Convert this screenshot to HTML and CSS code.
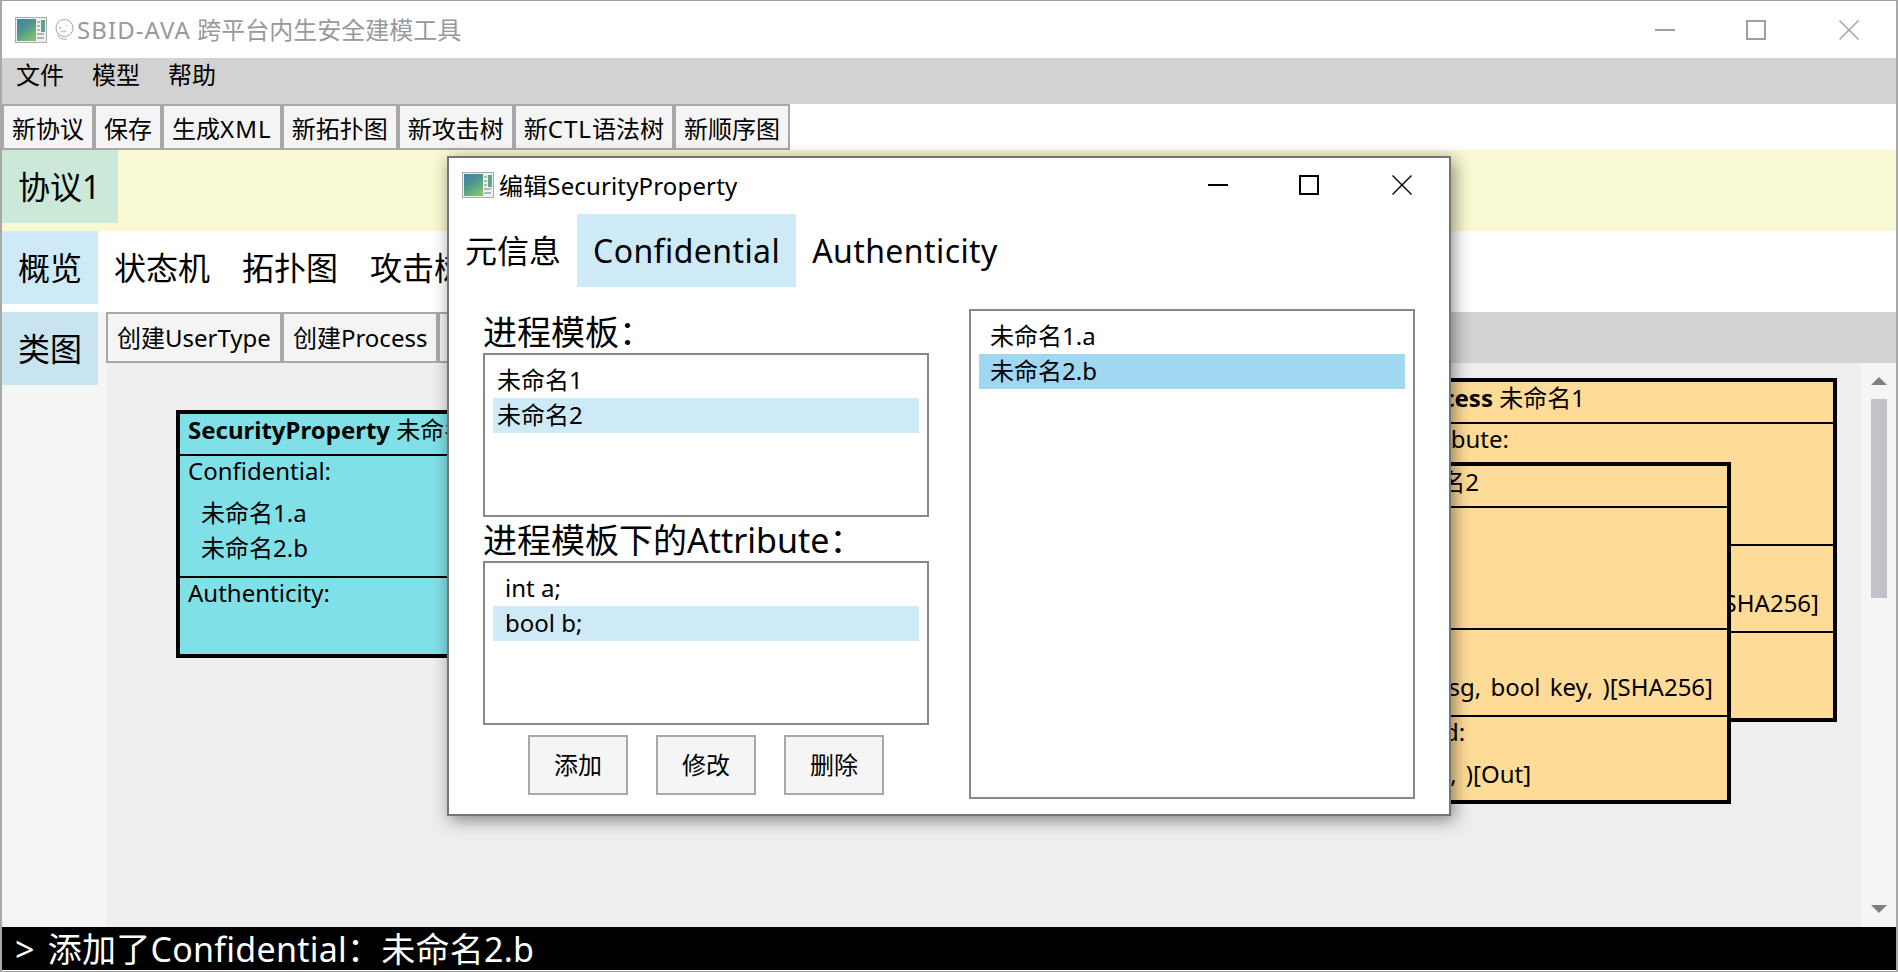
FILE: index.html
```html
<!DOCTYPE html>
<html lang="zh-CN">
<head>
<meta charset="utf-8">
<title>SBID-AVA</title>
<link rel="stylesheet" href="styles.css">
</head>
<body>
<svg class="defs" width="0" height="0" aria-hidden="true">
  <defs>
    <linearGradient id="appgrad" x1="0" y1="0" x2="0.6" y2="1">
      <stop offset="0" stop-color="#3f7fa8"/>
      <stop offset="0.55" stop-color="#4f9a8a"/>
      <stop offset="1" stop-color="#7fc070"/>
    </linearGradient>
    <symbol id="appicon" viewBox="0 0 32 26">
      <rect x="0.5" y="0.5" width="31" height="25" fill="#eef0f0" stroke="#a8acac"/>
      <rect x="2" y="2" width="19" height="22" fill="url(#appgrad)"/>
      <rect x="26" y="3" width="4" height="12" fill="#5fa58c"/>
      <path d="M22 5h3M22 9h3M22 13h3M22 17h7M22 21h7" stroke="#9aa2a2" stroke-width="1.5"/>
    </symbol>
  </defs>
</svg>
<div class="window">
  <header class="titlebar">
    <svg class="appicon"><use href="#appicon"/></svg>
    <svg class="smiley" viewBox="0 0 20 21" fill="none" stroke="#a8a8a8" stroke-width="1">
      <circle cx="10.5" cy="9" r="8.5"/>
      <path d="M4 16c1 3 3 4 6 4h3M5 8l2 2M12 6l1 1M7 12c2 1 3 1 5 0"/>
    </svg>
    <span class="title-text"><span class="caps">SBID-AVA</span> 跨平台内生安全建模工具</span>
    <div class="controls">
      <svg class="ctl" viewBox="0 0 20 20"><path d="M0 10h20" stroke-width="2"/></svg>
      <svg class="ctl" viewBox="0 0 20 20"><rect x="1" y="1" width="18" height="18" fill="none" stroke-width="2"/></svg>
      <svg class="ctl ctl-close" viewBox="0 0 20 20"><path d="M0.5 0.5l19 19M19.5 0.5l-19 19" stroke-width="1.4"/></svg>
    </div>
  </header>
  <nav class="menubar">
    <span class="menu-item">文件</span><span class="menu-item">模型</span><span class="menu-item">帮助</span>
  </nav>
  <div class="toolbar">
    <button class="btn">新协议</button><button class="btn">保存</button><button class="btn">生成<span class="caps">XML</span></button><button class="btn">新拓扑图</button><button class="btn">新攻击树</button><button class="btn">新<span class="caps">CTL</span>语法树</button><button class="btn">新顺序图</button>
  </div>
  <div class="tabrow tabrow-yellow">
    <div class="tab tab-green">协议1</div>
  </div>
  <div class="tabrow">
    <div class="tab tab-blue">概览</div>
    <div class="tab">状态机</div>
    <div class="tab">拓扑图</div>
    <div class="tab">攻击树</div>
  </div>
  <div class="workspace">
    <aside class="side">
      <div class="tab tab-side">类图</div>
    </aside>
    <section class="editor">
      <div class="canvas-tools">
        <button class="btn btn-tool">创建UserType</button><button class="btn btn-tool">创建Process</button><button class="btn btn-tool">创建SecurityProperty</button>
      </div>
      <div class="canvas-wrap">
        <div class="canvas">
          <div class="card card-sec">
            <div class="card-head"><b>SecurityProperty</b> 未命名</div>
            <div class="card-sect sect-tall">
              <div class="sect-label">Confidential:</div>
              <div class="sect-item">未命名1.a</div>
              <div class="sect-item">未命名2.b</div>
            </div>
            <div class="card-sect">
              <div class="sect-label">Authenticity:</div>
            </div>
          </div>
          <div class="card card-p1">
            <div class="card-head"><b>Process</b> 未命名1</div>
            <div class="card-sect sect-tall"><div class="sect-label">Attribute:</div></div>
            <div class="card-sect sect-mid">
              <div class="sect-label">Method:</div>
              <div class="sect-item sect-end">bit func(bit msg, )[SHA256]</div>
            </div>
            <div class="card-sect"><div class="sect-label">CommMethod:</div></div>
          </div>
          <div class="card card-p2">
            <div class="card-head"><b>Process</b> 未命名2</div>
            <div class="card-sect sect-tall"><div class="sect-label">Attribute:</div></div>
            <div class="card-sect sect-mid">
              <div class="sect-label">Method:</div>
              <div class="sect-item sect-end sect-spaced">func(bit msg, bool key, )[SHA256]</div>
            </div>
            <div class="card-sect">
              <div class="sect-label">CommMethod:</div>
              <div class="sect-item sect-comm">void send(m, )[Out]</div>
            </div>
          </div>
        </div>
        <div class="scrollbar">
          <span class="arrow arrow-up"></span>
          <span class="thumb"></span>
          <span class="arrow arrow-down"></span>
        </div>
      </div>
    </section>
  </div>
  <footer class="status">&gt; 添加了Confidential：未命名2.b</footer>
  <div class="bottom-strip"></div>

  <div class="dialog">
    <div class="dlg-title">
      <svg class="dlg-icon"><use href="#appicon"/></svg>
      <span class="dlg-title-text">编辑SecurityProperty</span>
      <div class="controls">
        <svg class="ctl ctl-dark" viewBox="0 0 20 20"><path d="M0 10h20" stroke-width="2"/></svg>
        <svg class="ctl ctl-dark" viewBox="0 0 20 20"><rect x="1" y="1" width="18" height="18" fill="none" stroke-width="2"/></svg>
        <svg class="ctl ctl-dark ctl-close" viewBox="0 0 20 20"><path d="M0.5 0.5l19 19M19.5 0.5l-19 19" stroke-width="1.4"/></svg>
      </div>
    </div>
    <div class="dlg-tabs">
      <div class="tab">元信息</div>
      <div class="tab tab-blue tab-latin">Confidential</div>
      <div class="tab tab-latin">Authenticity</div>
    </div>
    <div class="dlg-body">
      <div class="dlg-left">
        <div class="dlg-label">进程模板：</div>
        <ul class="list list-small">
          <li class="row">未命名1</li>
          <li class="row row-sel">未命名2</li>
        </ul>
        <div class="dlg-label">进程模板下的Attribute：</div>
        <ul class="list list-small">
          <li class="row row-ind">int a;</li>
          <li class="row row-ind row-sel">bool b;</li>
        </ul>
        <div class="dlg-actions">
          <button class="btn btn-act">添加</button><button class="btn btn-act">修改</button><button class="btn btn-act">删除</button>
        </div>
      </div>
      <ul class="list list-big">
        <li class="row row-big">未命名1.a</li>
        <li class="row row-big row-strong">未命名2.b</li>
      </ul>
    </div>
  </div>
</div>
</body>
</html>
```
FILE: styles.css
```css
* { box-sizing: border-box; }
html, body { margin: 0; padding: 0; }
body {
  width: 1898px;
  height: 972px;
  overflow: hidden;
  background: #fff;
  color: #000;
  font-family: "Noto Sans", "Noto Sans CJK SC", sans-serif;
  font-size: 24px;
}
.defs { position: absolute; }
.caps { letter-spacing: 0.045em; }
.window {
  position: relative;
  width: 1898px;
  height: 972px;
  display: flex;
  flex-direction: column;
  border-top: 1px solid #a0a0a0;
  border-left: 2px solid #a8a8a8;
  border-right: 2px solid #a8a8a8;
  background: #fff;
}
.titlebar {
  height: 57px;
  flex: none;
  display: flex;
  align-items: center;
  padding-left: 13px;
}
.appicon { width: 32px; height: 26px; flex: none; }
.smiley { width: 20px; height: 21px; margin-left: 7px; flex: none; }
.title-text { color: #999; margin-left: 3px; line-height: 57px; }
.controls {
  margin-left: auto;
  margin-right: 37px;
  display: flex;
  gap: 71px;
}
.ctl { width: 20px; height: 20px; stroke: #a0a0a0; display: block; }
.ctl-close { margin-left: 2px; }
.ctl-dark { stroke: #000; }
.menubar {
  height: 46px;
  flex: none;
  background: #d2d2d2;
  display: flex;
  align-items: flex-start;
  padding-left: 14px;
  gap: 28px;
}
.menu-item { line-height: 34px; }
.toolbar {
  height: 46px;
  flex: none;
  display: flex;
  align-items: stretch;
}
.btn {
  font: inherit;
  color: #000;
  background: #f4f4f4;
  border: 2px solid #a8a8a8;
  padding: 3px 8px 0;
  height: 46px;
  line-height: 38px;
  white-space: nowrap;
}
.tabrow {
  height: 81px;
  flex: none;
  display: flex;
  align-items: flex-start;
}
.tabrow-yellow { background: #f8f8d2; }
.tab {
  height: 73px;
  padding: 0 16px;
  font-size: 32px;
  line-height: 73px;
  white-space: nowrap;
}
.tab-latin { letter-spacing: 0.013em; }
.tab-green { background: #cbe8d8; padding-right: 18px; }
.tab-blue { background: #cfeaf7; }
.tab-side { background: #c8e4f1; width: 96px; }
.workspace {
  flex: 1;
  min-height: 0;
  display: flex;
}
.side {
  width: 104px;
  flex: none;
  background: #f5f5f5;
}
.editor {
  flex: 1;
  min-width: 0;
  display: flex;
  flex-direction: column;
}
.canvas-tools {
  height: 51px;
  flex: none;
  background: #d2d2d2;
  display: flex;
  align-items: flex-start;
  overflow: hidden;
}
.btn-tool { height: 51px; flex: none; padding: 0 9px; line-height: 43px; }
.canvas-wrap {
  flex: 1;
  min-height: 0;
  display: flex;
}
.canvas {
  flex: 1;
  position: relative;
  background: #eee;
  overflow: hidden;
}
.scrollbar {
  width: 35px;
  flex: none;
  background: #f5f5f5;
  position: relative;
}
.arrow {
  position: absolute;
  left: 10px;
  width: 0;
  height: 0;
  border-left: 8px solid transparent;
  border-right: 8px solid transparent;
}
.arrow-up { top: 14px; border-bottom: 8px solid #808080; }
.arrow-down { bottom: 14px; border-top: 8px solid #808080; }
.thumb {
  position: absolute;
  left: 10px;
  top: 36px;
  width: 16px;
  height: 199px;
  background: #c2c3c9;
}
.card {
  position: absolute;
  width: 447px;
  border: 4px solid #000;
  background: #fedb97;
}
.card-sec { left: 70px; top: 47px; width: 520px; height: 248px; background: #80e0e7; }
.card-p1 { left: 1284px; top: 15px; height: 344px; }
.card-p2 { left: 1178px; top: 99px; height: 342px; }
.card-head {
  height: 42px;
  line-height: 32px;
  padding: 0 8px;
  border-bottom: 2px solid #000;
  white-space: nowrap;
}
.card-sect {
  padding: 0 8px;
  white-space: nowrap;
}
.sect-tall { height: 122px; border-bottom: 2px solid #000; }
.sect-mid { height: 87px; border-bottom: 2px solid #000; }
.sect-label { line-height: 30px; }
.sect-item { line-height: 35px; padding-left: 13px; }
.sect-label + .sect-item { margin-top: 9px; }
.sect-end { text-align: right; padding-right: 6px; }
.sect-spaced { word-spacing: 3px; }
.sect-comm { word-spacing: 3px; }
.status {
  height: 43px;
  flex: none;
  background: #000;
  color: #fff;
  font-size: 34px;
  line-height: 44px;
  padding-left: 13px;
  word-spacing: 4px;
  letter-spacing: 0.25px;
  white-space: nowrap;
}
.bottom-strip {
  height: 2px;
  flex: none;
  background: #fff;
  border-bottom: 1px solid #a0a0a0;
}
.dialog {
  position: absolute;
  left: 445px;
  top: 155px;
  width: 1004px;
  height: 660px;
  background: #fff;
  border: 2px solid #757575;
  box-shadow: 3px 4px 16px rgba(0, 0, 0, 0.45);
  display: flex;
  flex-direction: column;
}
.dlg-title {
  height: 56px;
  flex: none;
  display: flex;
  align-items: center;
  padding: 0 0 3px 13px;
}
.dlg-icon { width: 32px; height: 26px; flex: none; }
.dlg-title-text { margin-left: 5px; letter-spacing: 0.15px; }
.dlg-tabs { height: 73px; flex: none; display: flex; }
.dlg-body {
  flex: 1;
  min-height: 0;
  display: flex;
  align-items: flex-start;
  padding: 22px 0 0 34px;
  gap: 40px;
}
.dlg-left { width: 446px; flex: none; }
.dlg-label {
  font-size: 34px;
  height: 44px;
  line-height: 46px;
  white-space: nowrap;
}
.list {
  list-style: none;
  margin: 0;
  padding: 8px;
  border: 2px solid #888;
  background: #fff;
}
.list-small { height: 164px; }
.list-big { width: 446px; height: 490px; }
.row { height: 35px; line-height: 33px; padding-left: 4px; white-space: nowrap; }
.row-ind { padding-left: 12px; }
.row-big { padding-left: 11px; }
.row-sel { background: #cfeaf7; }
.row-strong { background: #a0d8f2; }
.dlg-actions {
  display: flex;
  justify-content: center;
  gap: 28px;
  margin-top: 10px;
}
.btn-act { width: 100px; height: 60px; padding: 0; background: #f5f5f5; line-height: 52px; }
```
